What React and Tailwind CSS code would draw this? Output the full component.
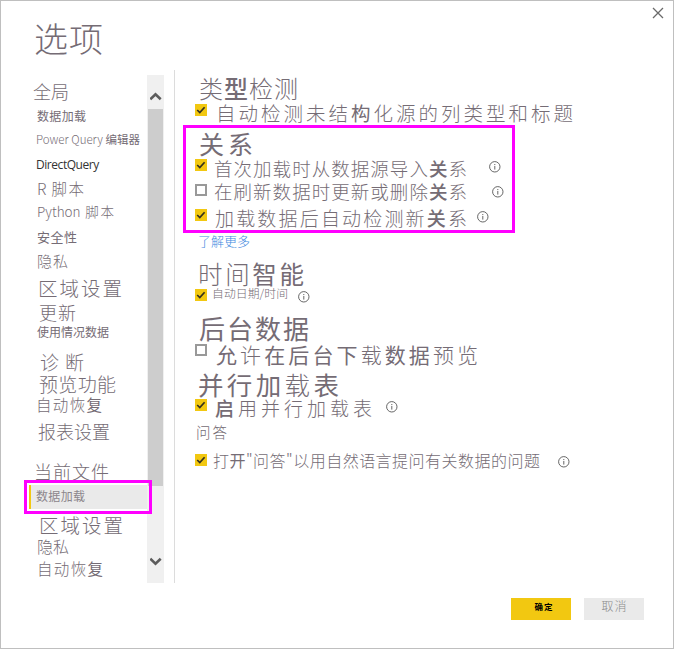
import React from "react";
import clsx from "clsx";

// Text run stretched evenly over the given width
function Label({ className, children }) {
  return (
    <span className={clsx("mb-[2px] block shrink-0 whitespace-nowrap leading-none [text-align-last:justify]", className)}>
      {children}
    </span>
  );
}

function NavItem({ row, text, children }) {
  return (
    <li className={clsx("flex h-5 items-center", row)}>
      <Label className={text}>{children}</Label>
    </li>
  );
}

function Heading({ row, text, children }) {
  return (
    <h2 className={clsx("flex h-4 items-center", row)}>
      <Label className={text}>{children}</Label>
    </h2>
  );
}

function Checkbox({ checked, className }) {
  return checked ? (
    <span className={clsx("size-3 shrink-0 bg-[#f2c811]", className)}>
      <svg viewBox="0 0 12 12" className="size-3" fill="none" stroke="#33301f" strokeWidth="1.7">
        <path d="M2.2 6 L4.8 8.5 L9.6 3.2" />
      </svg>
    </span>
  ) : (
    <span className={clsx("size-3 shrink-0 border-2 border-[#999]", className)} />
  );
}

function Info({ className }) {
  return (
    <svg viewBox="0 0 12 12" className={clsx("size-3 shrink-0", className)} fill="none" stroke="#666">
      <circle cx="5.8" cy="5.8" r="5.2" strokeWidth="1" />
      <path d="M5.8 5 V8.6 M5.8 3 V4.1" strokeWidth="1" />
    </svg>
  );
}

function Option({ row, checked, box, text, info, children }) {
  return (
    <div className={clsx("flex h-5 items-center", row)}>
      <Checkbox checked={checked} className={clsx("self-start", box)} />
      <Label className={text}>{children}</Label>
      {info && <Info className={clsx("self-start", info)} />}
    </div>
  );
}

function Sidebar() {
  return (
    <ul className="w-[147px] shrink-0">
      <NavItem row="mt-[12px] pl-[33px]" text="w-[36px] text-[18px]">全局</NavItem>
      <NavItem row="mt-[5px] pl-[37px]" text="w-[49px] text-[12px] font-normal">数据加载</NavItem>
      <NavItem row="mt-[4px] pl-[36px]" text="w-[104px] text-[11.5px]">Power Query <b>编辑器</b></NavItem>
      <NavItem row="mt-[5px] pl-[36px]" text="w-[64px] text-[12px] font-normal text-[#333] font-['Open_Sans',sans-serif] tracking-[-0.45px]">DirectQuery</NavItem>
      <NavItem row="mt-[4px] pl-[37px]" text="w-[47px] text-[15.5px]">R 脚本</NavItem>
      <NavItem row="mt-[3px] pl-[37px]" text="w-[77px] text-[13.5px]">Python 脚本</NavItem>
      <NavItem row="mt-[4px] pl-[37px]" text="w-[40px] text-[13px] font-normal">安全性</NavItem>
      <NavItem row="mt-[4px] pl-[37px]" text="w-[31px] text-[15px]">隐私</NavItem>
      <NavItem row="mt-[8px] pl-[38px]" text="w-[84px] text-[19.5px]">区域设置</NavItem>
      <NavItem row="mt-[4px] pl-[39px]" text="w-[37px] text-[18px]">更新</NavItem>
      <NavItem row="pl-[37px]" text="w-[72px] text-[12px] font-normal">使用情况数据</NavItem>
      <NavItem row="mt-[9px] pl-[40px]" text="w-[44px] text-[19px]">诊断</NavItem>
      <NavItem row="mt-[2px] pl-[39px]" text="w-[77px] text-[19px]">预览功能</NavItem>
      <NavItem row="mt-[2px] pl-[36px]" text="w-[66px] text-[15.5px]">自动恢<b>复</b></NavItem>
      <NavItem row="mt-[6px] pl-[38px]" text="w-[72px] text-[18px]">报表设置</NavItem>
      <li className="mt-[22px] flex h-4 items-center pl-[34px]">
        <Label className="w-[75px] text-[18px]">当前文件</Label>
      </li>
      <li className="relative z-10 ml-[24px] h-[34px] w-[128px] border-3 border-[#ff00ff] pt-[2px] pl-[2px]">
        <div className="flex h-6 w-[118px] items-center border-l-2 border-[#f2c811] bg-[#eaeaea] pl-[5px]">
          <Label className="mb-0 w-[49px] text-[12px] font-normal text-[#8c868c]">数据加载</Label>
        </div>
      </li>
      <NavItem row="mt-[2px] pl-[39px]" text="w-[84px] text-[19.5px]">区域设置</NavItem>
      <NavItem row="mt-[1px] pl-[37px]" text="w-[32px] text-[16px]">隐私</NavItem>
      <NavItem row="mt-[3px] pl-[37px]" text="mb-0 w-[66px] text-[15.5px]">自动恢<b>复</b></NavItem>
    </ul>
  );
}

function Chevron({ d, className }) {
  return (
    <svg viewBox="0 0 12 9" className={clsx("h-[9px] w-3", className)} fill="none" stroke="#5c5c5c" strokeWidth="2.6">
      <path d={d} />
    </svg>
  );
}

function Scrollbar() {
  return (
    <div className="mt-[5px] flex h-[508px] w-[17px] shrink-0 flex-col items-center bg-[#f0f0f0]">
      <Chevron className="mt-[17px]" d="M0.3 7.3 L5.5 2.3 L10.7 7.3" />
      <div className="mt-[8px] h-[377px] w-[15px] bg-[#cdcdcd]" />
      <Chevron className="mt-[71px]" d="M0.3 1.7 L5.5 6.7 L10.7 1.7" />
    </div>
  );
}

function Settings() {
  return (
    <main className="w-[420px]">
      <Heading row="mt-[11px] pl-[24px]" text="w-[99px] text-[24px]">
        类<b className="font-medium">型</b>检测
      </Heading>
      <Option row="mt-[7px] pl-[20px]" checked text="ml-[9px] w-[357px] text-[19.5px]">
        自动检测未结<b>构</b>化源的列类型和标题
      </Option>

      <section className="mt-[1px] ml-[8px] h-[108px] w-[332px] border-3 border-[#ff00ff]">
        <Heading row="mt-[8px] pl-[13px]" text="w-[54px] text-[25px] font-normal">关系</Heading>
        <Option row="mt-[7px] pl-[9px]" checked text="ml-[7px] w-[253px] text-[18.5px]" info="ml-[22px] mt-[2px]">
          首次加载时从数据源导入<b className="font-medium">关</b>系
        </Option>
        <Option row="mt-[3px] pl-[9px]" box="mt-[2px]" text="ml-[7px] w-[253px] text-[18.5px]" info="ml-[25px] mt-[4px]">
          在刷新数据时更新或删除<b className="font-medium">关</b>系
        </Option>
        <Option row="mt-[6px] pl-[9px]" checked box="mt-[1px]" text="ml-[8px] w-[252px] text-[19px]" info="ml-[10px] mt-[3px]">
          加载数据后自动检测新<b className="font-medium">关</b>系
        </Option>
      </section>

      <a className="flex h-4 items-center pl-[23px] text-[#3f8ae0]">
        <Label className="w-[52px] text-[13px]">了解更多</Label>
      </a>

      <Heading row="mt-[19px] pl-[23px]" text="mb-[4px] w-[106px] text-[24.5px]">
        时间<b>智能</b>
      </Heading>
      <Option row="pl-[20px]" checked box="mt-[5px]" text="ml-[5px] w-[76px] text-[11.8px]" info="ml-[10px] mt-[7px]">
        自动日期/时间
      </Option>

      <Heading row="mt-[17px] pl-[24px]" text="w-[110px] text-[26px] font-normal">后台数据</Heading>
      <Option row="mt-[8px] pl-[20px]" box="mt-[-1px]" text="ml-[9px] w-[262px] text-[21px]">
        <b>允</b>许<b>在后台下</b>载<b>数据</b>预览
      </Option>

      <Heading row="mt-[12px] pl-[23px]" text="w-[141px] text-[25.5px]">
        <b>并行加</b>载<b>表</b>
      </Heading>
      <Option row="mt-[5px] pl-[20px]" checked box="mt-[1px]" text="ml-[8px] w-[157px] text-[19px]" info="ml-[14px] mt-[3px]">
        <b className="font-medium">启</b>用并行加载表
      </Option>

      <Heading row="mt-[7px] pl-[21px]" text="w-[31px] text-[14.5px]">问答</Heading>
      <Option row="mt-[10px] pl-[20px]" checked box="mt-[3px]" text="ml-[6px] w-[327px] text-[16px]" info="ml-[18px] mt-[5px]">
        打<b>开</b>"问答"以用自然语言提问有关数据的问题
      </Option>
    </main>
  );
}

export default function App() {
  return (
    <div
      lang="zh-CN"
      className="flex h-[649px] w-[674px] flex-col overflow-hidden border border-[#bfbfbf] bg-white font-['Noto_Sans_CJK_SC',sans-serif] font-light text-[#756c75]"
    >
      <header className="-mt-px -ml-px flex h-[70px] justify-between">
        <h1 className="mt-[21px] ml-[34px]">
          <Label className="w-[69px] text-[34px]">选项</Label>
        </h1>
        <svg viewBox="0 0 12 12" className="mt-[7px] mr-[9px] size-3" fill="none" stroke="#6a6a6a" strokeWidth="1.3">
          <path d="M1 1 L11 11 M11 1 L1 11" />
        </svg>
      </header>

      <div className="-ml-px flex h-[513px]">
        <Sidebar />
        <Scrollbar />
        <div className="ml-[10px] w-px shrink-0 bg-[#dcdcdc]" />
        <Settings />
      </div>

      <footer className="mt-[15px] mr-[29px] flex justify-end gap-[13px]">
        <button className="flex h-[22px] w-[60px] justify-center bg-[#f2c811] pt-[4px] pl-[5px] text-black">
          <Label className="w-[18px] text-[8.5px] font-bold">确定</Label>
        </button>
        <button className="flex h-[22px] w-[60px] justify-center bg-[#eaeaea] pt-[2px] text-[#8a8a8a]">
          <Label className="w-[25px] text-[12px]">取消</Label>
        </button>
      </footer>
    </div>
  );
}
